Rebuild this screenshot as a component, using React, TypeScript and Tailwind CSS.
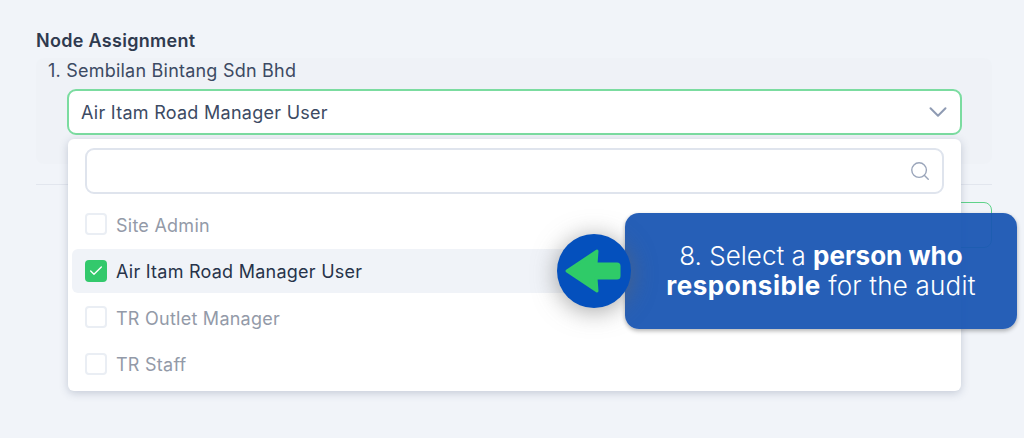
import { ChevronDown, Search, Check } from 'lucide-react';

const options = [
    { name: 'Site Admin', checked: false },
    { name: 'Air Itam Road Manager User', checked: true },
    { name: 'TR Outlet Manager', checked: false },
    { name: 'TR Staff', checked: false },
];

const App = () => {
    return (
        <div className="relative w-[1024px] h-[438px] overflow-hidden bg-[#f1f4f9] font-['Inter',sans-serif] text-[#3c4a63]">
            <div className="pt-[31px] pl-9 pr-8">
                <h2 className="text-[18px] leading-[20px] font-semibold tracking-[0.3px] text-[#2f3a4f]">Node Assignment</h2>
                <div className="mt-[7px] h-[106px] rounded-lg bg-[#eff2f7]">
                    <p className="pl-3 pt-px text-[18px] leading-[24px] tracking-[0.22px]">1. Sembilan Bintang Sdn Bhd</p>
                    <div className="relative ml-[31px] mr-[30px] mt-[6px]">
                        <div className="flex items-center justify-between h-[46px] pl-[12px] pr-[7px] bg-white border-2 border-[#7bdca0] rounded-[9px] text-[18px] tracking-[0.27px]">
                            <span>Air Itam Road Manager User</span>
                            <ChevronDown size={30} strokeWidth={1.6} className="text-[#8f9bb3]" />
                        </div>
                        {/* dropdown */}
                        <div className="absolute z-10 left-[1px] right-[1px] top-[50px] h-[252px] bg-white rounded-md shadow-[0_2px_8px_rgba(60,75,110,0.25)]">
                            <div className="pt-[9px] px-[17px]">
                                <div className="flex items-center justify-end h-[46px] pr-[11px] border-2 border-[#dfe4ed] rounded-[9px]">
                                    <Search size={22} strokeWidth={1.5} className="text-[#9aa5ba]" />
                                </div>
                            </div>
                            <ul className="mt-[8px] px-[4px]">
                                {options.map((o) => (
                                    <li
                                        key={o.name}
                                        className={`flex items-center gap-[9px] h-[44px] mb-[2.5px] pl-[13px] rounded-md text-[18px] tracking-[0.25px] ${o.checked ? 'bg-[#f0f3f8] text-[#27334a]' : 'text-[#939aa8]'}`}
                                    >
                                        {o.checked ? (
                                            <span className="flex items-center justify-center w-[22px] h-[22px] rounded bg-[#33c96c]">
                                                <Check size={16} strokeWidth={2} className="text-white" />
                                            </span>
                                        ) : (
                                            <span className="w-[22px] h-[22px] rounded border-2 border-[#eaeef4] bg-white" />
                                        )}
                                        <span className="pt-[2px]">{o.name}</span>
                                    </li>
                                ))}
                            </ul>
                        </div>
                    </div>
                </div>
                <hr className="mt-5 border-[#e2e6ee]" />
                <div className="mt-[17px] ml-auto w-[200px] h-[46px] rounded-lg border-[1.5px] border-[#5fd38a]" />
            </div>

            {/* callout */}
            <div className="absolute z-20 left-[625px] top-[213px] flex items-center justify-center w-[392px] h-[116px] rounded-[14px] bg-[#1a56b3]/95 shadow-[0_2px_4px_rgba(0,0,0,0.3)] text-white text-[26px] leading-[30px] font-light text-center">
                <p>8. Select a <b className="font-bold">person who</b><br /><b className="font-bold tracking-[0.5px]">responsible</b> <span className="tracking-[0.2px]">for the audit</span></p>
            </div>
            <div className="absolute z-30 left-[557px] top-[234px] w-[74px] h-[74px] rounded-full bg-[#0450bd] shadow-[0_3px_24px_rgba(100,100,100,0.6)]">
                <svg width="74" height="74" viewBox="0 0 74 74">
                    <path d="M10 37 L40 17 L39 30 L60 30 Q62 30 62 32 L62 42 Q62 44 60 44 L39 44 L40 57 Z" fill="#2fcb68" stroke="#2fcb68" strokeWidth="3" strokeLinejoin="round" />
                </svg>
            </div>
        </div>
    );
};

export default App;
